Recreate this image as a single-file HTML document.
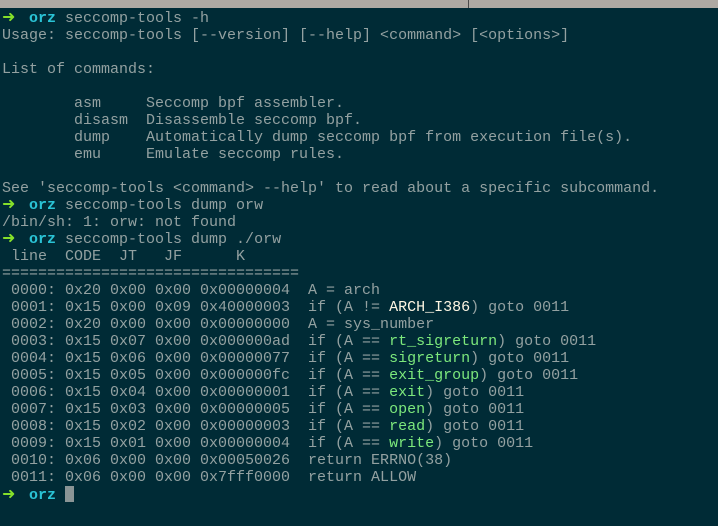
<!DOCTYPE html>
<html><head><meta charset="utf-8"><style>
html,body{margin:0;padding:0;width:718px;height:526px;overflow:hidden;background:#002b36;}
.bar{position:absolute;left:0;top:0;width:718px;height:8px;background:#aea9a3;}
.div{position:absolute;left:468px;top:0;width:1px;height:8px;background:#4a4a4a;}
pre{position:absolute;left:2px;top:10px;margin:0;font-family:"Liberation Mono",monospace;font-size:15px;line-height:17px;color:#93a1a1;letter-spacing:0;}
.a{color:#85e02a;font-weight:bold;font-family:"DejaVu Sans",sans-serif;font-size:16px;display:inline-block;width:9px;line-height:10px}
.o{color:#2ac3d5;font-weight:bold}
.g{color:#7ce87c}
.w{color:#fdf6e3}
.c{display:inline-block;width:9px;height:16px;background:#8a9596;vertical-align:-3px}
</style></head><body>
<div class="bar"></div><div class="div"></div>
<pre><span class="a">➜</span>  <span class="o">orz</span> seccomp-tools -h
Usage: seccomp-tools [--version] [--help] &lt;command&gt; [&lt;options&gt;]

List of commands:

        asm     Seccomp bpf assembler.
        disasm  Disassemble seccomp bpf.
        dump    Automatically dump seccomp bpf from execution file(s).
        emu     Emulate seccomp rules.

See 'seccomp-tools &lt;command&gt; --help' to read about a specific subcommand.
<span class="a">➜</span>  <span class="o">orz</span> seccomp-tools dump orw
/bin/sh: 1: orw: not found
<span class="a">➜</span>  <span class="o">orz</span> seccomp-tools dump ./orw
 line  CODE  JT   JF      K
=================================
 0000: 0x20 0x00 0x00 0x00000004  A = arch
 0001: 0x15 0x00 0x09 0x40000003  if (A != <span class="w">ARCH_I386</span>) goto 0011
 0002: 0x20 0x00 0x00 0x00000000  A = sys_number
 0003: 0x15 0x07 0x00 0x000000ad  if (A == <span class="g">rt_sigreturn</span>) goto 0011
 0004: 0x15 0x06 0x00 0x00000077  if (A == <span class="g">sigreturn</span>) goto 0011
 0005: 0x15 0x05 0x00 0x000000fc  if (A == <span class="g">exit_group</span>) goto 0011
 0006: 0x15 0x04 0x00 0x00000001  if (A == <span class="g">exit</span>) goto 0011
 0007: 0x15 0x03 0x00 0x00000005  if (A == <span class="g">open</span>) goto 0011
 0008: 0x15 0x02 0x00 0x00000003  if (A == <span class="g">read</span>) goto 0011
 0009: 0x15 0x01 0x00 0x00000004  if (A == <span class="g">write</span>) goto 0011
 0010: 0x06 0x00 0x00 0x00050026  return ERRNO(38)
 0011: 0x06 0x00 0x00 0x7fff0000  return ALLOW
<span class="a">➜</span>  <span class="o">orz</span> <span class="c"></span></pre>
</body></html>
